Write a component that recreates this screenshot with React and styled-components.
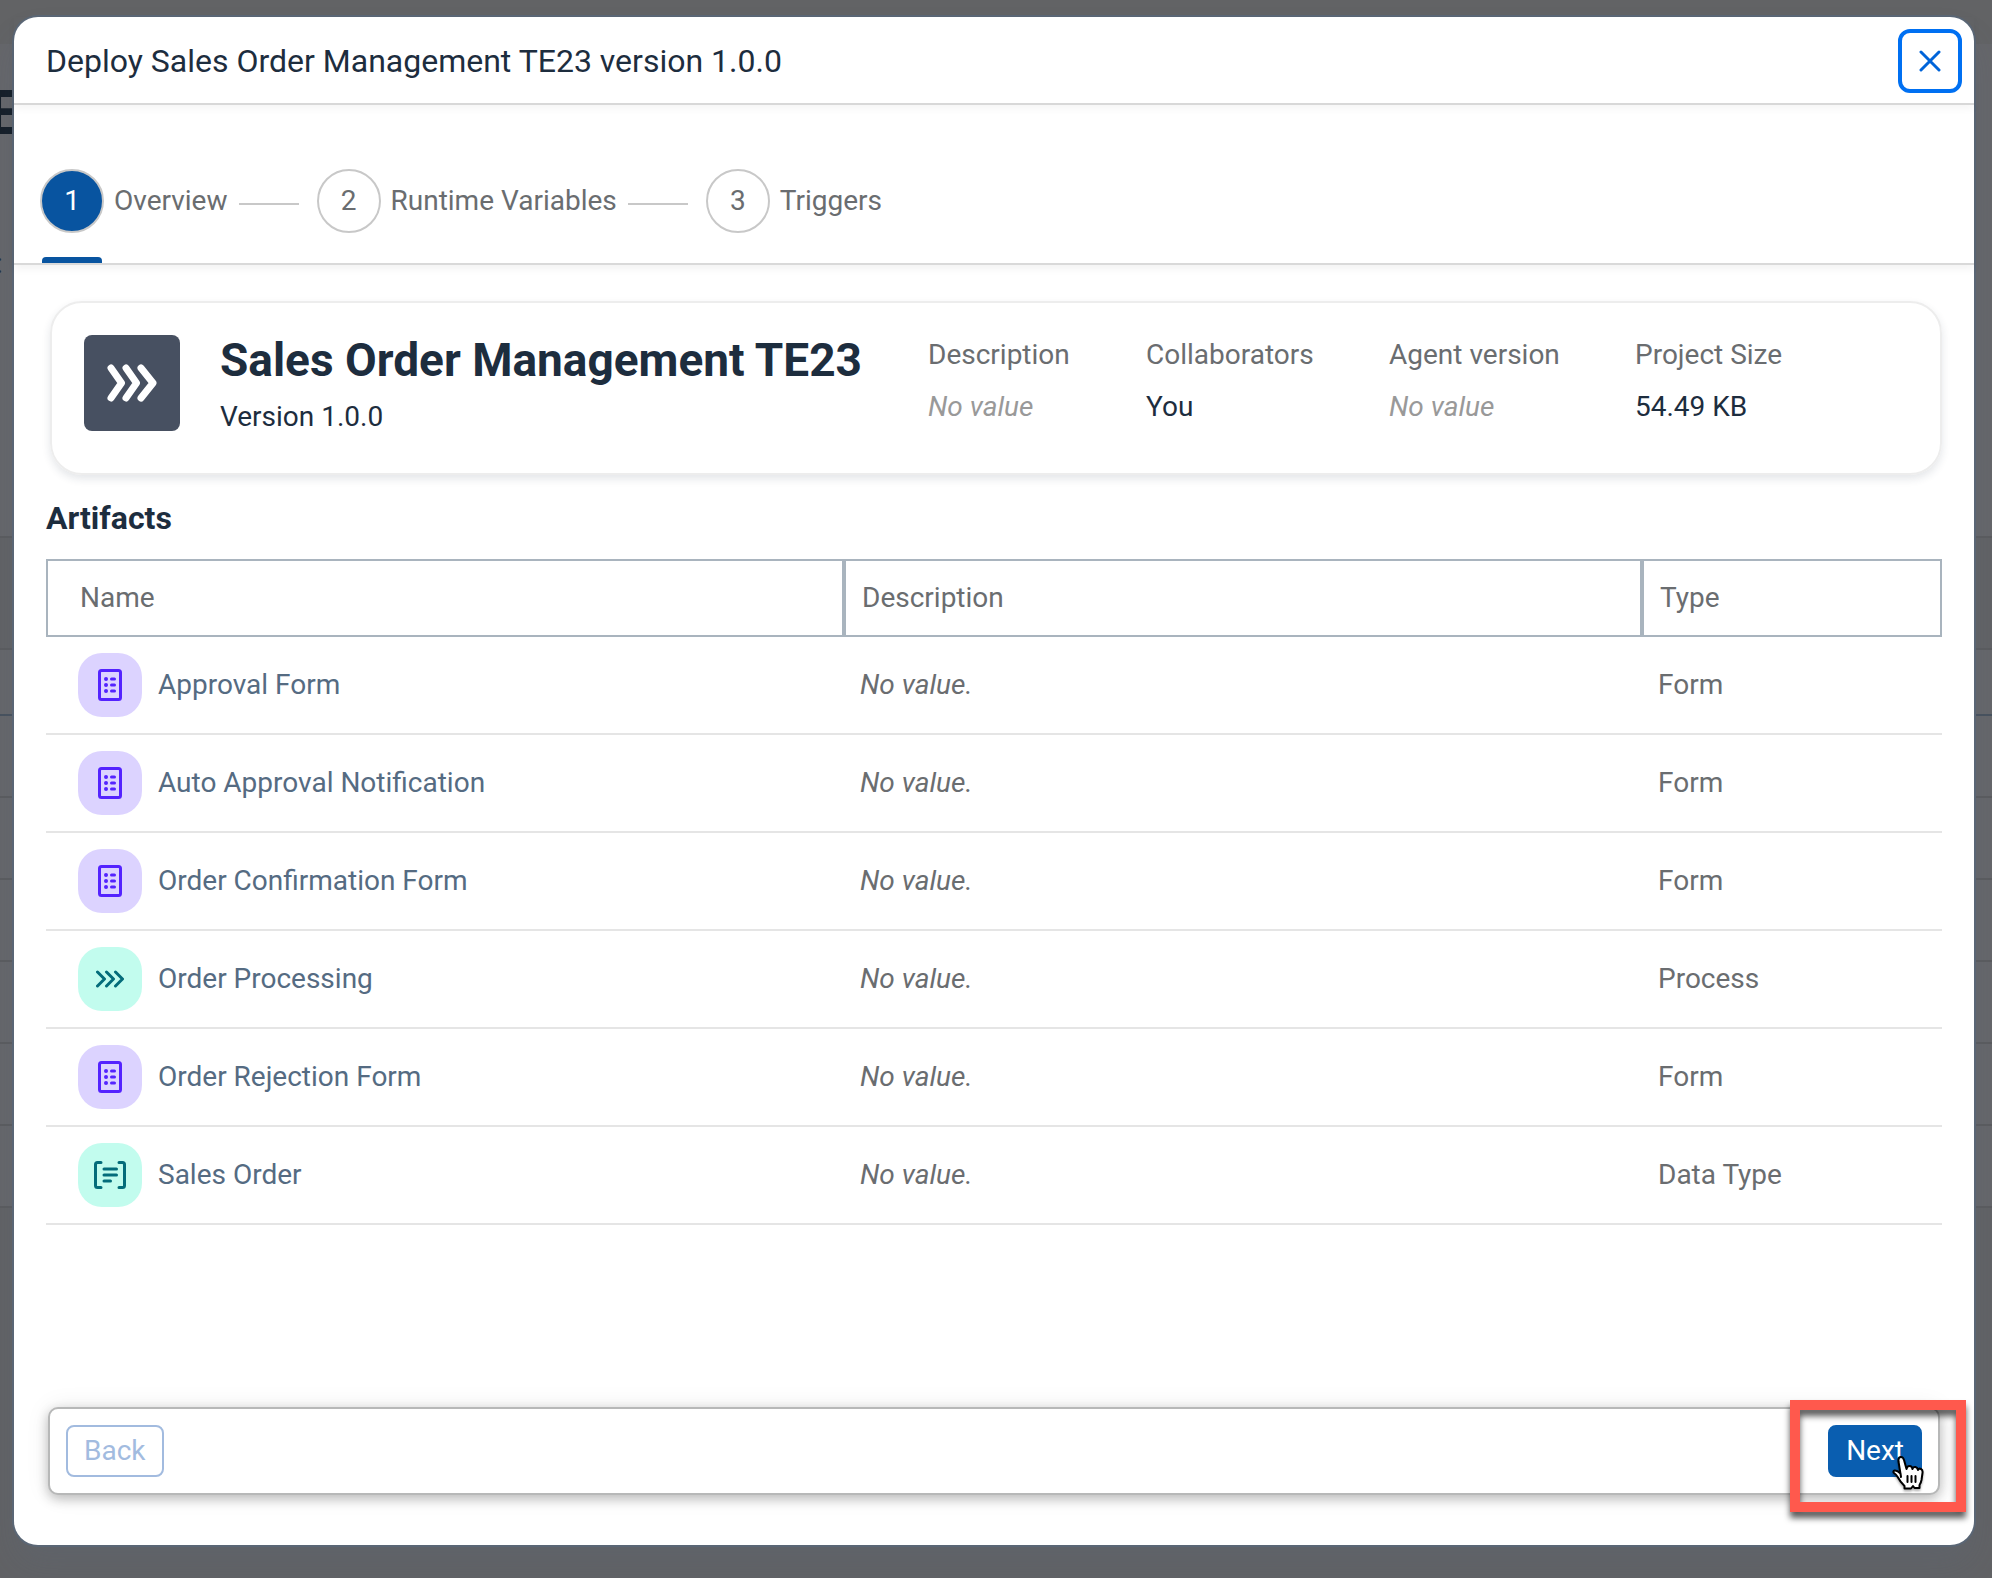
import React from "react";
import styled, { createGlobalStyle, css } from "styled-components";

const GlobalStyle = createGlobalStyle`
  *, *::before, *::after { box-sizing: border-box; }
  body {
    margin: 0;
    background: #636467;
    color: #1d2d3e;
    font-family: Roboto, "Liberation Sans", Arial, sans-serif;
    font-size: 28px;
    line-height: 36px;
  }
  button { font: inherit; cursor: pointer; }
`;

const Screen = styled.div`
  position: relative;
  min-height: 100vh;
  overflow: hidden;
`;

/* The dimmed page behind the dialog */
const Backdrop = styled.div`
  position: absolute;
  inset: 0;
  background: #65666a;
`;

const BackdropBar = styled.div`
  height: 44px;
  background: #626365;
`;

const BackdropTitle = styled.div`
  height: 138px;
  padding-top: 36px;
  margin-left: -12px;
  font-size: 62px;
  line-height: 66px;
  font-weight: 700;
  color: #141d27;
`;

const BackdropText = styled.div`
  height: 354px;
  padding-top: 64px;
  margin-left: -4px;
  color: #27303a;
`;

const BackdropRow = styled.div`
  height: ${(p) => p.$height}px;
  border-top: 2px solid ${(p) => (p.$strong ? "#47515d" : "#5a5b5e")};
  background: ${(p) => (p.$shaded ? "#616265" : "transparent")};
`;

const Overlay = styled.div`
  position: relative;
  display: flex;
  min-height: 100vh;
  padding: 17px 18px 33px 14px;
`;

const Dialog = styled.section`
  flex: 1;
  min-width: 0;
  display: flex;
  flex-direction: column;
  background: #fff;
  border-radius: 24px;
  box-shadow: 0 0 0 2px #5a6675, 0 20px 32px rgba(85, 107, 130, 0.16);
`;

const DialogHeader = styled.header`
  display: flex;
  align-items: center;
  justify-content: space-between;
  height: 88px;
  padding: 2px 12px 0 32px;
  border-bottom: 2px solid #d9d9d9;
  box-shadow: 0 4px 8px rgba(0, 0, 0, 0.04);
`;

const DialogTitle = styled.h1`
  margin: 0;
  font-size: 32px;
  line-height: 40px;
  font-weight: 400;
`;

const CloseButton = styled.button`
  display: grid;
  place-items: center;
  width: 64px;
  height: 64px;
  padding: 0;
  border: 4px solid #0070f2;
  border-radius: 12px;
  background: #fff;
  color: #0064d9;
`;

const Wizard = styled.nav`
  padding: 64px 26px 0;
  border-bottom: 2px solid #d9d9d9;
  box-shadow: 0 4px 8px rgba(0, 0, 0, 0.05);
`;

const Steps = styled.ol`
  display: flex;
  margin: 0;
  padding: 0;
  list-style: none;
`;

const Step = styled.li`
  display: flex;
  align-items: flex-start;
`;

const StepButton = styled.button`
  display: grid;
  grid-template-columns: 64px auto;
  column-gap: 10px;
  padding: 0;
  border: 0;
  background: none;
  color: #6a6d70;
  line-height: 64px;
  text-align: left;
`;

const StepNumber = styled.span`
  height: 64px;
  border: 2px solid #c8c8c8;
  border-radius: 50%;
  line-height: 60px;
  text-align: center;
  ${(p) =>
    p.$current &&
    css`
      background: #0854a0;
      color: #fff;
    `}
`;

const StepMarker = styled.span`
  width: 60px;
  height: 6px;
  margin: 24px 2px 0;
  border-radius: 4px 4px 0 0;
  background: ${(p) => (p.$current ? "#0854a0" : "transparent")};
`;

const StepLine = styled.span`
  width: 60px;
  height: 2px;
  margin: 34px 18px 0 11px;
  background: #c8c8c8;
`;

const Content = styled.main`
  flex: 1;
  padding: 36px 32px 0;
`;

const SummaryCard = styled.section`
  display: flex;
  align-items: flex-start;
  margin-left: 4px;
  padding: 32px 32px 38px;
  border: 2px solid #ededed;
  border-radius: 32px;
  box-shadow: 0 4px 8px rgba(34, 53, 72, 0.12);
`;

const ProjectIcon = styled.div`
  display: grid;
  place-items: center;
  flex: none;
  width: 96px;
  height: 96px;
  margin-right: 40px;
  border-radius: 8px;
  background: #475061;
  color: #fff;
`;

const ProjectName = styled.div`
  flex: none;
  min-width: 648px;
  margin-right: 60px;
`;

const ProjectTitle = styled.h2`
  margin: 0 0 14px;
  font-size: 46px;
  line-height: 50px;
  font-weight: 700;
`;

const ProjectVersion = styled.p`
  margin: 0;
`;

const Facts = styled.dl`
  display: grid;
  grid-template-columns: 218px 243px 246px auto;
  margin: 0;
  padding-top: 2px;
`;

const FactLabel = styled.dt`
  margin-bottom: 16px;
  color: #6a6d70;
`;

const FactValue = styled.dd`
  margin: 0;
  ${(p) =>
    p.$empty &&
    css`
      color: #999;
      font-style: italic;
    `}
`;

const SectionTitle = styled.h3`
  margin: 0;
  padding-top: 2px;
  font-size: 32px;
  line-height: 82px;
  font-weight: 700;
`;

const Table = styled.table`
  width: 100%;
  table-layout: fixed;
  border-collapse: separate;
  border-spacing: 0;
  text-align: left;
`;

const HeadCell = styled.th`
  width: ${(p) => p.$width || "auto"};
  height: 78px;
  padding: 0 ${(p) => (p.$first ? "32px" : "16px")};
  border: 2px solid #a9b4be;
  color: #6a6d70;
  font-weight: 400;
`;

const Cell = styled.td`
  height: 98px;
  padding: 0 ${(p) => (p.$first ? "32px" : "16px")};
  border-bottom: 2px solid #e5e5e5;
  color: #6a6d70;
  font-style: ${(p) => (p.$italic ? "italic" : "normal")};
`;

const Artifact = styled.div`
  display: flex;
  align-items: center;
  gap: 16px;
  color: #556b82;
`;

const Tile = styled.span`
  display: grid;
  place-items: center;
  width: 64px;
  height: 64px;
  border-radius: 24px;
  ${(p) =>
    p.$kind === "form"
      ? css`
          background: #dcd3ff;
          color: #5423ff;
        `
      : css`
          background: #c2fcee;
          color: #046c7a;
        `}
`;

const Footer = styled.footer`
  display: flex;
  justify-content: space-between;
  margin: 0 34px 50px;
  padding: 16px;
  border: 2px solid #b7b8b8;
  border-radius: 10px;
  background: #fff;
  box-shadow: 0 4px 12px rgba(0, 0, 0, 0.24), 0 0 24px rgba(0, 0, 0, 0.08);
`;

const ActionButton = styled.button`
  height: 52px;
  padding: 0 16px;
  border: 2px solid ${(p) => (p.$primary ? "#0a5eb0" : "#a2bbdf")};
  border-radius: 8px;
  background: ${(p) => (p.$primary ? "#0a5eb0" : "#fff")};
  color: ${(p) => (p.$primary ? "#fff" : "#a2bbdf")};
  line-height: 48px;
`;

const NextArea = styled.div`
  position: relative;
`;

const Highlight = styled.div`
  position: absolute;
  inset: -25px -44px -35px -38px;
  border: 10px solid #ff594d;
  filter: drop-shadow(0 6px 3px rgba(0, 0, 0, 0.65));
  pointer-events: none;
`;

const Pointer = styled.svg`
  position: absolute;
  right: -4px;
  bottom: -14px;
  pointer-events: none;
  filter: drop-shadow(0 2px 1px rgba(0, 0, 0, 0.3));
`;

const Chevrons = ({ width, height, weight }) => (
  <svg
    width={width}
    height={height}
    viewBox="0 0 50 38"
    preserveAspectRatio="none"
    fill="none"
    stroke="currentColor"
    strokeWidth={weight}
    strokeLinecap="round"
    strokeLinejoin="round"
    aria-hidden="true"
  >
    <path d="M4 4 14.500 19 4 34M19 4 29.500 19 19 34M34 4 46 19 34 34" />
  </svg>
);

const ProcessIcon = () => (
  <svg width="28" height="18" viewBox="0 0 28 18" fill="none" stroke="currentColor" strokeWidth="3" strokeLinecap="round" strokeLinejoin="round" aria-hidden="true">
    <path d="M1.500 2 8.500 9 1.500 16M10.500 2 17.500 9 10.500 16M19.500 2 26.500 9 19.500 16" />
  </svg>
);

const FormIcon = () => (
  <svg width="24" height="32" viewBox="0 0 24 32" fill="none" stroke="currentColor" strokeWidth="3" strokeLinecap="round" aria-hidden="true">
    <rect x="1.500" y="1.500" width="21" height="29" rx="2" />
    <path d="M8 10h.01M8 16h.01M8 22h.01" strokeWidth="4" />
    <path d="M13.500 10h3M13.500 16h3M13.500 22h3" />
  </svg>
);

const DataTypeIcon = () => (
  <svg width="32" height="28" viewBox="0 0 32 28" fill="none" stroke="currentColor" strokeWidth="3" strokeLinecap="round" strokeLinejoin="round" aria-hidden="true">
    <path d="M7 1.500H3.500Q1.500 1.500 1.500 3.500V24.500Q1.500 26.500 3.500 26.500H7M25 1.500H28.500Q30.500 1.500 30.500 3.500V24.500Q30.500 26.500 28.500 26.500H25" />
    <path d="M10 8h12.500M10 14h12.500M10 20h6.500" />
  </svg>
);

const ICONS = { form: FormIcon, process: ProcessIcon, data: DataTypeIcon };

const STEPS = ["Overview", "Runtime Variables", "Triggers"];

const FACTS = [
  { label: "Description", value: null },
  { label: "Collaborators", value: "You" },
  { label: "Agent version", value: null },
  { label: "Project Size", value: "54.49 KB" },
];

const ARTIFACTS = [
  { name: "Approval Form", kind: "form", type: "Form" },
  { name: "Auto Approval Notification", kind: "form", type: "Form" },
  { name: "Order Confirmation Form", kind: "form", type: "Form" },
  { name: "Order Processing", kind: "process", type: "Process" },
  { name: "Order Rejection Form", kind: "form", type: "Form" },
  { name: "Sales Order", kind: "data", type: "Data Type" },
];

export default function App() {
  return (
    <Screen>
      <GlobalStyle />
      <Backdrop aria-hidden="true">
        <BackdropBar />
        <BackdropTitle>E</BackdropTitle>
        <BackdropText>:</BackdropText>
        <BackdropRow $height={112} $shaded />
        <BackdropRow $height={66} />
        <BackdropRow $height={82} $strong />
        {[0, 1, 2, 3, 4].map((row) => (
          <BackdropRow key={row} $height={82} />
        ))}
        <BackdropRow $height={372} $shaded />
      </Backdrop>
      <Overlay>
        <Dialog role="dialog" aria-labelledby="dialog-title">
          <DialogHeader>
            <DialogTitle id="dialog-title">Deploy Sales Order Management TE23 version 1.0.0</DialogTitle>
            <CloseButton type="button" aria-label="Close">
              <svg width="22" height="22" viewBox="0 0 22 22" stroke="currentColor" strokeWidth="3" strokeLinecap="round" aria-hidden="true">
                <path d="M2 2 20 20M20 2 2 20" />
              </svg>
            </CloseButton>
          </DialogHeader>

          <Wizard aria-label="Deployment steps">
            <Steps>
              {STEPS.map((label, index) => (
                <Step key={label}>
                  <StepButton type="button" aria-current={index === 0 ? "step" : undefined}>
                    <StepNumber $current={index === 0}>{index + 1}</StepNumber>
                    <span>{label}</span>
                    <StepMarker $current={index === 0} />
                  </StepButton>
                  {index < STEPS.length - 1 && <StepLine />}
                </Step>
              ))}
            </Steps>
          </Wizard>

          <Content>
            <SummaryCard>
              <ProjectIcon>
                <Chevrons width={50} height={38} weight={7} />
              </ProjectIcon>
              <ProjectName>
                <ProjectTitle>Sales Order Management TE23</ProjectTitle>
                <ProjectVersion>Version 1.0.0</ProjectVersion>
              </ProjectName>
              <Facts>
                {FACTS.map((fact) => (
                  <div key={fact.label}>
                    <FactLabel>{fact.label}</FactLabel>
                    <FactValue $empty={!fact.value}>{fact.value || "No value"}</FactValue>
                  </div>
                ))}
              </Facts>
            </SummaryCard>

            <SectionTitle id="artifacts-title">Artifacts</SectionTitle>
            <Table aria-labelledby="artifacts-title">
              <thead>
                <tr>
                  <HeadCell scope="col" $first>Name</HeadCell>
                  <HeadCell scope="col">Description</HeadCell>
                  <HeadCell scope="col" $width="300px">Type</HeadCell>
                </tr>
              </thead>
              <tbody>
                {ARTIFACTS.map(({ name, kind, type }) => {
                  const Icon = ICONS[kind];
                  return (
                    <tr key={name}>
                      <Cell $first>
                        <Artifact>
                          <Tile $kind={kind}>
                            <Icon />
                          </Tile>
                          {name}
                        </Artifact>
                      </Cell>
                      <Cell $italic>No value.</Cell>
                      <Cell>{type}</Cell>
                    </tr>
                  );
                })}
              </tbody>
            </Table>
          </Content>

          <Footer>
            <ActionButton type="button" disabled>Back</ActionButton>
            <NextArea>
              <ActionButton type="button" $primary>Next</ActionButton>
              <Highlight />
              <Pointer width="34" height="36" viewBox="0 0 34 36" stroke="#000" strokeWidth="2" strokeLinejoin="round" strokeLinecap="round" aria-hidden="true">
                <path
                  fill="#fff"
                  d="M9 22 6.500 6.500Q6 2.500 8.500 2Q11 1.500 12 5L14.500 14Q15 11 17.500 11Q20 11 20.500 14Q21 11.500 23.500 12Q25.500 12.500 26 15Q27 13 29 14Q31 15 30.500 18L29.500 25Q29 28 27.500 30V33H22.500L21 31L19 33.500H12.500V31Q8 26.500 6 22.500Q4.500 19.500 2 18Q0.500 16.500 2.500 15.500Q5 15 8.500 18.500Z"
                />
                <path d="M15.500 21V27M19.500 21V27M23.500 21V27" />
              </Pointer>
            </NextArea>
          </Footer>
        </Dialog>
      </Overlay>
    </Screen>
  );
}
